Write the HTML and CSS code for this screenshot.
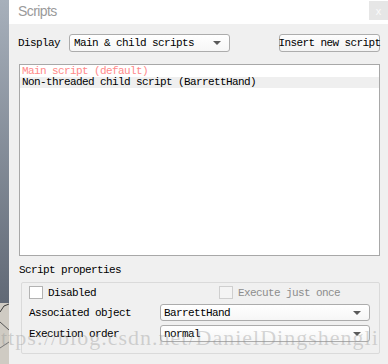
FILE: index.html
```html
<!DOCTYPE html>
<html>
<head>
<meta charset="utf-8">
<link rel="stylesheet" href="styles.css">
</head>
<body>
<div class="screen">
  <div class="desk">
    <svg width="9" height="364" viewBox="0 0 9 364">
      <defs>
        <linearGradient id="g" x1="0" y1="0" x2="0" y2="1">
          <stop offset="0" stop-color="#a7b0bb"/>
          <stop offset="1" stop-color="#5f6774"/>
        </linearGradient>
      </defs>
      <rect x="0" y="0" width="9" height="310" fill="url(#g)"/>
      <rect x="0" y="303" width="9" height="61" fill="#cfcbc3"/>
      <polyline points="0,312 4,306 9,304" fill="none" stroke="#3a3a3a" stroke-width="1"/>
      <polyline points="0,322 9,330" fill="none" stroke="#555" stroke-width="1"/>
      <polyline points="0,348 9,342" fill="none" stroke="#777" stroke-width="1"/>
    </svg>
  </div>
  <div class="dialog">
    <div class="titlebar">
      <span class="title">Scripts</span>
      <span class="close">x</span>
    </div>
    <div class="content">
      <div class="toprow">
        <span class="label">Display</span>
        <div class="combo combo-display"><span>Main &amp; child scripts</span><i class="arrow"></i></div>
        <div class="button">Insert new script</div>
      </div>
      <div class="list">
        <div class="row main">Main script (default)</div>
        <div class="row sel">Non-threaded child script (BarrettHand)</div>
      </div>
      <div class="section">Script properties</div>
      <div class="group">
        <div class="checkrow">
          <div class="check first"><span class="box"></span><span>Disabled</span></div>
          <div class="check disabled"><span class="box"></span><span>Execute just once</span></div>
        </div>
        <div class="prop">
          <span class="plabel">Associated object</span>
          <div class="combo combo-prop"><span>BarrettHand</span><i class="arrow"></i></div>
        </div>
        <div class="prop">
          <span class="plabel">Execution order</span>
          <div class="combo combo-prop"><span>normal</span><i class="arrow"></i></div>
        </div>
      </div>
    </div>
  </div>
  <div class="watermark">https://blog.csdn.net/DanielDingshengli</div>
</div>
</body>
</html>
```

FILE: styles.css
```css
html, body {
  margin: 0;
  padding: 0;
}
body {
  width: 388px;
  height: 364px;
  overflow: hidden;
  background: #f0f0f0;
}
.screen {
  position: relative;
  display: flex;
  width: 388px;
  height: 364px;
  overflow: hidden;
  font-family: "Liberation Mono", monospace;
  font-size: 11px;
  letter-spacing: -0.6px;
  color: #000;
}
.desk {
  width: 9px;
  flex: none;
  line-height: 0;
}
.dialog {
  flex: 1;
  background: #f0f0f0;
  display: flex;
  flex-direction: column;
}
.titlebar {
  height: 24px;
  background: #ffffff;
  display: flex;
  align-items: flex-start;
}
.title {
  font-family: "Liberation Sans", sans-serif;
  font-size: 14px;
  letter-spacing: -0.6px;
  color: #9a9a9a;
  margin-left: 9px;
  margin-top: 3px;
  line-height: 16px;
}
.close {
  margin-left: auto;
  margin-top: 1px;
  width: 19px;
  height: 19px;
  background: #e6e6e6;
  color: #fafafa;
  font-family: "Liberation Sans", sans-serif;
  font-size: 11px;
  letter-spacing: 0;
  display: flex;
  align-items: center;
  justify-content: center;
}
.content {
  padding: 10px 8px 0 9px;
  display: flex;
  flex-direction: column;
}
.toprow {
  display: flex;
  align-items: center;
  height: 18px;
}
.label {
  width: 51px;
  line-height: 12px;
}
.combo {
  box-sizing: border-box;
  border: 1px solid #acacac;
  border-radius: 3px;
  background: linear-gradient(#ffffff, #f6f6f6);
  display: flex;
  align-items: center;
  position: relative;
  line-height: 12px;
}
.combo-display {
  width: 161px;
  height: 18px;
  padding-left: 4px;
}
.arrow {
  position: absolute;
  right: 8px;
  top: 50%;
  margin-top: -2px;
  width: 0;
  height: 0;
  border-left: 4px solid transparent;
  border-right: 4px solid transparent;
  border-top: 4px solid #5a5a5a;
}
.button {
  margin-left: auto;
  box-sizing: border-box;
  width: 101px;
  height: 18px;
  border: 1px solid #adadad;
  border-radius: 3px;
  background: linear-gradient(#fdfdfd, #f3f3f3);
  display: flex;
  align-items: center;
  justify-content: center;
  white-space: nowrap;
  overflow: visible;
  line-height: 12px;
}
.list {
  margin-top: 12px;
  margin-left: 1px;
  box-sizing: border-box;
  height: 192px;
  background: #fff;
  border: 1px solid #a8a8a8;
  padding-top: 1px;
}
.row {
  height: 11px;
  line-height: 11px;
  padding-left: 2px;
  white-space: nowrap;
}
.row.main {
  color: #ff8a8a;
}
.row.sel {
  background: #efefef;
}
.section {
  margin-top: 8px;
  margin-left: 1px;
  line-height: 12px;
}
.group {
  margin-top: 6px;
  margin-left: 3px;
  box-sizing: border-box;
  height: 72px;
  border: 1px solid #dadada;
  border-radius: 2px;
  padding: 3px 9px 0 7px;
  display: flex;
  flex-direction: column;
}
.checkrow {
  display: flex;
  align-items: center;
  height: 13px;
}
.check {
  display: flex;
  align-items: center;
  line-height: 12px;
}
.check.first {
  width: 190px;
}
.box {
  box-sizing: border-box;
  width: 14px;
  height: 13px;
  border: 1px solid #b3b3b3;
  background: #fff;
  margin-right: 5px;
}
.check.disabled {
  color: #8d8d8d;
}
.check.disabled .box {
  border-color: #cfcfcf;
  background: #f4f4f4;
}
.prop {
  display: flex;
  align-items: center;
  margin-top: 5px;
}
.prop + .prop {
  margin-top: 4px;
}
.plabel {
  width: 131px;
  line-height: 12px;
}
.combo-prop {
  width: 210px;
  height: 17px;
  padding-left: 3px;
}
.watermark {
  position: absolute;
  left: -11px;
  top: 326px;
  font-family: "Liberation Serif", serif;
  font-size: 22px;
  letter-spacing: 1px;
  line-height: 24px;
  color: rgba(140, 140, 140, 0.35);
  white-space: nowrap;
  pointer-events: none;
}
```
